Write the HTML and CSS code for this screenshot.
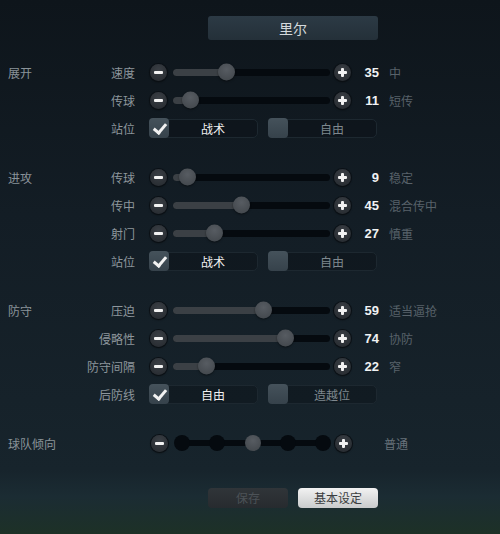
FILE: index.html
```html
<!DOCTYPE html>
<html lang="zh">
<head>
  <meta charset="UTF-8">
  <title>战术设定</title>
  <link rel="stylesheet" href="styles.css">
</head>
<body>
  <div class="panel">
    <div class="team-name">里尔</div>

    <!-- 展开 -->
    <div class="group">
      <div class="row">
        <div class="sec">展开</div>
        <div class="lbl">速度</div>
        <div class="btn minus"></div>
        <div class="track"><div class="fill" style="width:35%"></div><div class="rail"><div class="thumb" style="left:35%"></div></div></div>
        <div class="btn plus"></div>
        <div class="num">35</div>
        <div class="desc">中</div>
      </div>
      <div class="row">
        <div class="sec"></div>
        <div class="lbl">传球</div>
        <div class="btn minus"></div>
        <div class="track"><div class="fill" style="width:11%"></div><div class="rail"><div class="thumb" style="left:11%"></div></div></div>
        <div class="btn plus"></div>
        <div class="num">11</div>
        <div class="desc">短传</div>
      </div>
      <div class="row">
        <div class="sec"></div>
        <div class="lbl">站位</div>
        <div class="opt on"><span class="box"></span>战术</div>
        <div class="opt"><span class="box"></span>自由</div>
      </div>
    </div>

    <!-- 进攻 -->
    <div class="group">
      <div class="row">
        <div class="sec">进攻</div>
        <div class="lbl">传球</div>
        <div class="btn minus"></div>
        <div class="track"><div class="fill" style="width:9%"></div><div class="rail"><div class="thumb" style="left:9%"></div></div></div>
        <div class="btn plus"></div>
        <div class="num">9</div>
        <div class="desc">稳定</div>
      </div>
      <div class="row">
        <div class="sec"></div>
        <div class="lbl">传中</div>
        <div class="btn minus"></div>
        <div class="track"><div class="fill" style="width:45%"></div><div class="rail"><div class="thumb" style="left:45%"></div></div></div>
        <div class="btn plus"></div>
        <div class="num">45</div>
        <div class="desc">混合传中</div>
      </div>
      <div class="row">
        <div class="sec"></div>
        <div class="lbl">射门</div>
        <div class="btn minus"></div>
        <div class="track"><div class="fill" style="width:27%"></div><div class="rail"><div class="thumb" style="left:27%"></div></div></div>
        <div class="btn plus"></div>
        <div class="num">27</div>
        <div class="desc">慎重</div>
      </div>
      <div class="row">
        <div class="sec"></div>
        <div class="lbl">站位</div>
        <div class="opt on"><span class="box"></span>战术</div>
        <div class="opt"><span class="box"></span>自由</div>
      </div>
    </div>

    <!-- 防守 -->
    <div class="group">
      <div class="row">
        <div class="sec">防守</div>
        <div class="lbl">压迫</div>
        <div class="btn minus"></div>
        <div class="track"><div class="fill" style="width:59%"></div><div class="rail"><div class="thumb" style="left:59%"></div></div></div>
        <div class="btn plus"></div>
        <div class="num">59</div>
        <div class="desc">适当逼抢</div>
      </div>
      <div class="row">
        <div class="sec"></div>
        <div class="lbl">侵略性</div>
        <div class="btn minus"></div>
        <div class="track"><div class="fill" style="width:74%"></div><div class="rail"><div class="thumb" style="left:74%"></div></div></div>
        <div class="btn plus"></div>
        <div class="num">74</div>
        <div class="desc">协防</div>
      </div>
      <div class="row">
        <div class="sec"></div>
        <div class="lbl">防守间隔</div>
        <div class="btn minus"></div>
        <div class="track"><div class="fill" style="width:22%"></div><div class="rail"><div class="thumb" style="left:22%"></div></div></div>
        <div class="btn plus"></div>
        <div class="num">22</div>
        <div class="desc">窄</div>
      </div>
      <div class="row">
        <div class="sec"></div>
        <div class="lbl">后防线</div>
        <div class="opt on"><span class="box"></span>自由</div>
        <div class="opt"><span class="box"></span>造越位</div>
      </div>
    </div>

    <!-- 球队倾向 -->
    <div class="group">
      <div class="row">
        <div class="sec wide">球队倾向</div>
        <div class="btn minus"></div>
        <div class="steps">
          <span class="dot"></span>
          <span class="dot"></span>
          <span class="dot sel"></span>
          <span class="dot"></span>
          <span class="dot"></span>
        </div>
        <div class="btn plus"></div>
        <div class="num"></div>
        <div class="desc tend">普通</div>
      </div>
    </div>

    <div class="actions">
      <button class="action save" disabled>保存</button>
      <button class="action basic">基本设定</button>
    </div>
  </div>
</body>
</html>
```

FILE: styles.css
```css
/* RESET */
* {
  margin: 0;
  padding: 0;
  box-sizing: border-box;
}
body {
  width: 500px;
  height: 534px;
  overflow: hidden;
  font-family: "Noto Sans CJK SC", "Noto Sans", sans-serif;
  font-size: 12px;
  color: #8c959b;
  background: linear-gradient(180deg, #0e151b 0%, #131d25 40%, #16222a 75%, #17242c 88%, #1b2c33 93%, #1d3127 100%);
}
.panel {
  padding: 16px 0 0 8px;
}
/* ----- TEAM NAME ----- */
.team-name {
  width: 170px;
  height: 24px;
  margin-left: 200px;
  margin-bottom: 18px;
  border-radius: 3px;
  background: linear-gradient(180deg, #2c3a45, #243039);
  color: #d4d9dc;
  font-size: 14px;
  line-height: 24px;
  text-align: center;
}
/* ----- ROWS ----- */
.group + .group {
  margin-top: 21px;
}
.row {
  display: flex;
  align-items: center;
  height: 28px;
}
.sec {
  width: 70px;
  flex: none;
  color: #8a9399;
}
.sec.wide {
  width: 142px;
}
.lbl {
  width: 57px;
  flex: none;
  text-align: right;
  margin-right: 14px;
  color: #8d969c;
}
/* minus / plus */
.btn {
  position: relative;
  width: 17px;
  height: 17px;
  flex: none;
  border-radius: 50%;
  background: radial-gradient(circle at 50% 35%, #3a3f45, #24282d);
  box-shadow: 0 0 0 1px #0b1015, 0 1px 2px rgba(0,0,0,0.6);
}
.btn::before,
.btn::after {
  content: "";
  position: absolute;
  left: 4px;
  top: 7px;
  width: 9px;
  height: 3px;
  background: #f2f2f2;
  border-radius: 1px;
}
.minus {
  margin-left: 1px;
}
.minus::after {
  display: none;
}
.plus::after {
  left: 7px;
  top: 4px;
  width: 3px;
  height: 9px;
}
/* slider */
.track {
  position: relative;
  width: 157px;
  height: 7px;
  margin: 0 4px 0 6px;
  flex: none;
  border-radius: 4px;
  background: #050a0f;
}
.fill {
  height: 100%;
  border-radius: 4px;
  background: #3b4045;
}
.rail {
  position: absolute;
  left: 0;
  right: 5px;
  top: 0;
  bottom: 0;
}
.thumb {
  position: absolute;
  top: 50%;
  width: 17px;
  height: 17px;
  margin-left: -8px;
  transform: translateY(-50%);
  border-radius: 50%;
  background: radial-gradient(circle at 50% 35%, #575c62, #3f4449);
  box-shadow: 0 1px 2px rgba(0,0,0,0.5);
}
.num {
  width: 28px;
  flex: none;
  text-align: right;
  font-family: "Liberation Sans", Arial, sans-serif;
  font-weight: bold;
  font-size: 13px;
  color: #f0f2f3;
}
.desc {
  margin-left: 10px;
  color: #58626a;
}
.desc.tend {
  margin-left: 4px;
  color: #68727a;
}
/* team tendency steps */
.steps {
  position: relative;
  display: flex;
  justify-content: space-between;
  align-items: center;
  width: 157px;
  margin: 0 4px 0 6px;
  flex: none;
}
.steps::before {
  content: "";
  position: absolute;
  left: 6px;
  right: 6px;
  top: 50%;
  height: 6px;
  margin-top: -3px;
  background: #050a0f;
}
.dot {
  position: relative;
  width: 16px;
  height: 16px;
  border-radius: 50%;
  background: #050a0f;
}
.dot.sel {
  background: radial-gradient(circle at 50% 35%, #575c62, #3f4449);
}
/* option toggles */
.opt {
  position: relative;
  display: flex;
  align-items: center;
  justify-content: center;
  width: 109px;
  height: 19px;
  padding-left: 19px;
  margin-right: 10px;
  border: 1px solid #1d2830;
  border-radius: 5px;
  background: rgba(8, 14, 19, 0.35);
  color: #7f888e;
}
.opt.on {
  color: #f2f2f2;
}
.box {
  position: absolute;
  left: -1px;
  top: 50%;
  width: 20px;
  height: 20px;
  margin-top: -10px;
  border-radius: 4px;
  background: linear-gradient(180deg, #45525b, #36424b);
}
.opt.on .box::after {
  content: "";
  position: absolute;
  left: 7px;
  top: 3px;
  width: 5px;
  height: 10px;
  border-right: 3px solid #f2f2f2;
  border-bottom: 3px solid #f2f2f2;
  transform: rotate(40deg);
}
/* ----- ACTIONS ----- */
.actions {
  display: flex;
  gap: 10px;
  margin-top: 31px;
  padding-left: 200px;
}
.action {
  width: 80px;
  height: 20px;
  border: none;
  border-radius: 4px;
  font-family: "Noto Sans CJK SC", sans-serif;
  font-size: 12px;
  line-height: 20px;
}
.save {
  background: linear-gradient(180deg, #303539, #272b2f);
  color: #4c5257;
}
.basic {
  background: linear-gradient(180deg, #f2f2f2, #c9cbcc);
  color: #3a3d40;
}
```
